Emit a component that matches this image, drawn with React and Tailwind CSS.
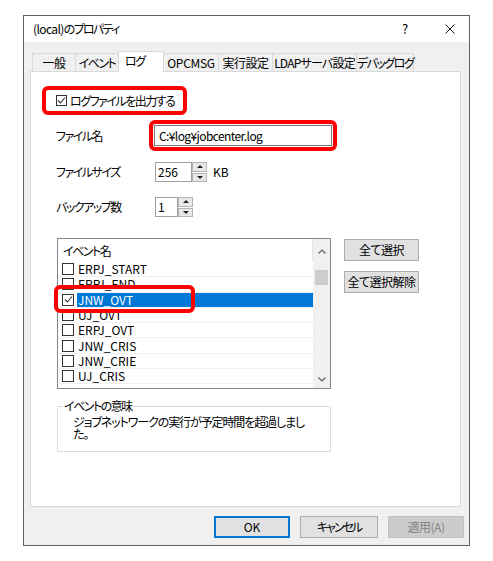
import React from 'react'

// Meiryo UI kana are narrow; squeeze the CJK fallback to match
const kana = 'tracking-[-1.5px]'
const kanji = 'tracking-[-0.5px]'

const tabs = [
  { label: '一般', w: 'w-[43px]', t: kanji },
  { label: 'イベント', w: 'w-[43px]', t: kana },
  { label: 'ログ', w: 'w-[46px]', t: kana, active: true },
  { label: 'OPCMSG', w: 'w-[54px]', t: 'tracking-[-0.3px]' },
  { label: '実行設定', w: 'w-[54px]', t: kanji },
  { label: 'LDAPサーバ設定', w: 'w-[84px]', t: 'tracking-[-0.8px]' },
  { label: 'デバッグログ', w: 'w-[58px]', t: kana, last: true },
]

const events = [
  { name: 'ERPJ_START' },
  { name: 'ERPJ_END' },
  { name: 'JNW_OVT', checked: true, selected: true },
  { name: 'UJ_OVT' },
  { name: 'ERPJ_OVT' },
  { name: 'JNW_CRIS' },
  { name: 'JNW_CRIE' },
  { name: 'UJ_CRIS' },
]

function CheckBox({ checked, small }) {
  return (
    <span className={`flex shrink-0 items-center justify-center border border-[#333333] bg-white ${small ? 'h-[11px] w-[11px]' : 'h-[12px] w-[12px]'}`}>
      {checked && (
        <svg width="9" height="9" viewBox="0 0 9 9">
          <path d="M1 4.5 L3.5 7 L8 1.5" fill="none" stroke="#333333" strokeWidth="1.1" />
        </svg>
      )}
    </span>
  )
}

function Spinner() {
  return (
    <div className="flex h-full w-[15px] flex-col gap-px">
      <div className="flex flex-1 items-center justify-center border border-[#b4b4b4] bg-[#e8e8e8]">
        <svg width="6" height="3" viewBox="0 0 6 3"><path d="M3 0 L6 3 L0 3 Z" fill="#222222" /></svg>
      </div>
      <div className="flex flex-1 items-center justify-center border border-[#b4b4b4] bg-[#e8e8e8]">
        <svg width="6" height="3" viewBox="0 0 6 3"><path d="M0 0 L6 0 L3 3 Z" fill="#222222" /></svg>
      </div>
    </div>
  )
}

export default function App() {
  return (
    <div className="h-[561px] w-[493px] bg-white pl-[23px] pt-[15px] font-['Noto_Sans_CJK_JP',sans-serif] text-[12px] leading-[16px] text-black [font-feature-settings:'palt']">
      <div className="flex h-[531px] w-[447px] flex-col border border-[#5f5f5f] bg-[#f0f0f0]">
        {/* title bar */}
        <div className="flex h-[26px] items-center bg-white pl-[9px]">
          <span className="flex-1 whitespace-nowrap">
            <span className="tracking-[-0.6px]">(local)</span>
            <span className="tracking-[-1.7px]">のプロパティ</span>
          </span>
          <span className="w-[14px] text-[13px]">?</span>
          <span className="ml-[29px] mr-[14px] flex w-[10px] items-center">
            <svg width="10" height="10" viewBox="0 0 10 10">
              <path d="M0.5 0.5 L9.5 9.5 M9.5 0.5 L0.5 9.5" stroke="#111111" strokeWidth="1" />
            </svg>
          </span>
        </div>

        {/* tabs */}
        <div className="ml-[8px] mt-[9px] flex h-[20px] items-end">
          {tabs.map((t) =>
            t.active ? (
              <div key={t.label} className={`${t.w} ${t.t} relative z-10 -mb-px flex h-[21px] whitespace-nowrap border border-b-0 border-[#d9d9d9] bg-white pl-[6px] pt-[1px]`}>
                {t.label}
              </div>
            ) : (
              <div key={t.label} className={`${t.w} ${t.t} flex h-[18px] items-center justify-center whitespace-nowrap border-l border-t border-[#d9d9d9] ${t.last ? 'border-r' : ''} ${t.label === 'OPCMSG' ? 'border-l-0' : ''}`}>
                {t.label}
              </div>
            )
          )}
        </div>

        {/* panel */}
        <div className="ml-[6px] flex h-[436px] w-[431px] flex-col border border-[#d9d9d9] bg-white">
          <div className="ml-[11px] mt-[14px] flex h-[29px] w-[145px] items-center rounded-[6px] border-4 border-[#ff0000] pl-[10px]">
            <CheckBox checked small />
            <span className={`ml-[3px] whitespace-nowrap ${kana}`}>ログファイルを出力する</span>
          </div>

          <div className="mt-[5px] flex h-[31px] items-center">
            <span className={`ml-[25px] w-[93px] ${kana}`}>ファイル名</span>
            <div className="flex h-[31px] w-[188px] items-center rounded-[6px] border-4 border-[#ff0000] px-px">
              <div className="flex h-[21px] flex-1 items-center border border-[#7a7a7a] bg-white pl-[4px] tracking-[-0.6px]">
                C:¥log¥jobcenter.log
              </div>
            </div>
          </div>

          <div className="mt-[11px] flex h-[20px] items-center">
            <span className={`ml-[25px] w-[99px] ${kana}`}>ファイルサイズ</span>
            <div className="flex h-full w-[37px] items-center border border-[#a0a0a0] bg-white pl-[2px]">256</div>
            <Spinner />
            <span className="ml-[6px]">KB</span>
          </div>

          <div className="mt-[15px] flex h-[20px] items-center">
            <span className={`ml-[25px] w-[99px] ${kana}`}>バックアップ数</span>
            <div className="flex h-full w-[23px] items-center border border-[#a0a0a0] bg-white pl-[2px]">1</div>
            <Spinner />
          </div>

          <div className="mt-[21px] flex items-start">
            <div className="relative ml-[26px] flex h-[151px] w-[274px] border border-[#828790] bg-white">
              <div className="flex flex-1 flex-col">
                <div className={`flex h-[23px] items-center border-r border-[#e5e5e5] pl-[5px] ${kana}`}>イベント名</div>
                {events.map((e) => (
                  <div key={e.name} className="flex h-[15.3px] items-center border-b border-[#f0f0f0] pl-[4px] leading-[12px]">
                    <CheckBox checked={e.checked} />
                    {e.selected ? (
                      <span className="ml-[3px] flex h-full flex-1 items-center bg-[#0078d7] pl-px text-white">{e.name}</span>
                    ) : (
                      <span className="ml-[4px]">{e.name}</span>
                    )}
                  </div>
                ))}
              </div>
              <div className="flex w-[17px] flex-col items-center bg-[#f0f0f0]">
                <div className="flex h-[24px] items-center">
                  <svg width="8" height="5" viewBox="0 0 8 5"><path d="M0.5 4.5 L4 1 L7.5 4.5" fill="none" stroke="#606060" strokeWidth="1.2" /></svg>
                </div>
                <div className="mt-[7px] h-[15px] w-[13px] bg-[#cdcdcd]" />
                <div className="flex-1" />
                <div className="flex h-[18px] items-center">
                  <svg width="8" height="5" viewBox="0 0 8 5"><path d="M0.5 0.5 L4 4 L7.5 0.5" fill="none" stroke="#606060" strokeWidth="1.2" /></svg>
                </div>
              </div>
              {/* annotation */}
              <div className="absolute left-[-4px] top-[46px] h-[28px] w-[141px] rounded-[6px] border-4 border-[#ff0000]" />
            </div>
            <div className="ml-[13px] mt-px flex flex-col gap-[10px]">
              <button className={`flex h-[22px] w-[75px] items-center justify-center border border-[#adadad] bg-[#e1e1e1] ${kanji}`}>全て選択</button>
              <button className={`flex h-[22px] w-[75px] items-center justify-center whitespace-nowrap border border-[#adadad] bg-[#e1e1e1] ${kanji}`}>全て選択解除</button>
            </div>
          </div>

          <fieldset className="ml-[26px] mt-[10px] h-[53px] w-[274px] border border-[#dcdcdc]">
            <legend className={`ml-[5px] px-px leading-[14px] ${kana}`}>イベントの意味</legend>
            <p className="whitespace-nowrap pl-[15px] pt-[3px] leading-[12px] tracking-[-1.1px]">
              ジョブネットワークの実行が予定時間を超過しまし<br />た。
            </p>
          </fieldset>
        </div>

        {/* dialog buttons */}
        <div className="mr-[5px] mt-[9px] flex justify-end gap-[10px]">
          <button className="flex h-[22px] w-[76px] items-center justify-center border border-[#0078d7] bg-[#e1e1e1] outline outline-1 -outline-offset-2 outline-[#0078d7]">OK</button>
          <button className="flex h-[22px] w-[78px] items-center justify-center border border-[#adadad] bg-[#e1e1e1] tracking-[-2px]">キャンセル</button>
          <button className={`flex h-[22px] w-[76px] items-center justify-center border border-[#bfbfbf] bg-[#cccccc] text-[#838383] ${kanji}`}>適用(A)</button>
        </div>
      </div>
    </div>
  )
}
